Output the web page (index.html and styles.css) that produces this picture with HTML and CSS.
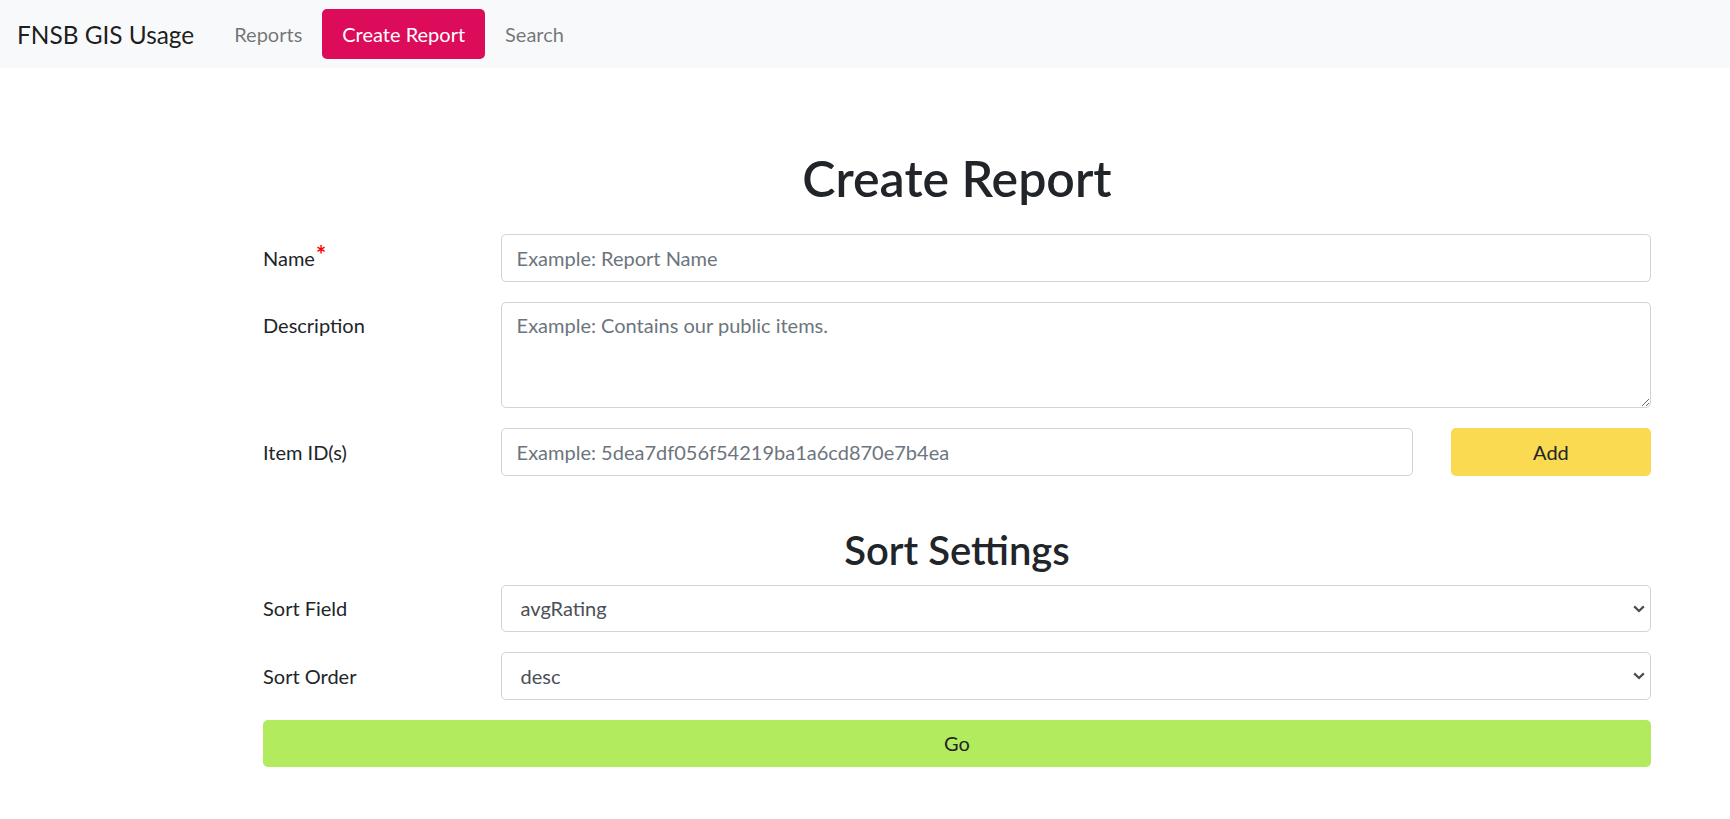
FILE: index.html
```html
<!DOCTYPE html>
<html lang="en">
<head>
<meta charset="utf-8">
<title>FNSB GIS Usage - Create Report</title>
<link rel="stylesheet" href="styles.css">
</head>
<body>
<nav class="navbar">
  <a class="brand" href="#">FNSB GIS Usage</a>
  <ul class="nav">
    <li><a class="nav-link" href="#">Reports</a></li>
    <li><a class="nav-link active" href="#">Create Report</a></li>
    <li><a class="nav-link" href="#">Search</a></li>
  </ul>
</nav>
<main class="page">
  <div class="container">
    <h1 class="title">Create Report</h1>
    <form class="form">
      <div class="row">
        <label class="label" for="name">Name<span class="req">*</span></label>
        <input class="control span-10" id="name" type="text" placeholder="Example: Report Name">
      </div>
      <div class="row">
        <label class="label" for="desc">Description</label>
        <textarea class="control textarea span-10" id="desc" placeholder="Example: Contains our public items."></textarea>
      </div>
      <div class="row">
        <label class="label" for="items">Item ID(s)</label>
        <input class="control span-8" id="items" type="text" placeholder="Example: 5dea7df056f54219ba1a6cd870e7b4ea">
        <button class="btn btn-add span-2" type="button">Add</button>
      </div>
      <h2 class="subtitle">Sort Settings</h2>
      <div class="row">
        <label class="label" for="sortField">Sort Field</label>
        <div class="select-wrap span-10">
          <select class="control select" id="sortField">
            <option>avgRating</option>
          </select>
          <svg class="chevron" width="12" height="8" viewBox="0 0 12 8" aria-hidden="true"><path d="M1.2 1.4 L6 6 L10.8 1.4" fill="none" stroke="#474c52" stroke-width="2.2"/></svg>
        </div>
      </div>
      <div class="row">
        <label class="label" for="sortOrder">Sort Order</label>
        <div class="select-wrap span-10">
          <select class="control select" id="sortOrder">
            <option>desc</option>
          </select>
          <svg class="chevron" width="12" height="8" viewBox="0 0 12 8" aria-hidden="true"><path d="M1.2 1.4 L6 6 L10.8 1.4" fill="none" stroke="#474c52" stroke-width="2.2"/></svg>
        </div>
      </div>
      <button class="btn btn-go" type="button">Go</button>
    </form>
  </div>
</main>
</body>
</html>
```
FILE: styles.css
```css
* { box-sizing: border-box; }

body {
  margin: 0;
  font-family: Lato, "Liberation Sans", sans-serif;
  font-size: 20px;
  line-height: 1.5;
  color: #212529;
  background: #fff;
}

.navbar {
  display: flex;
  align-items: center;
  height: 68px;
  padding: 0 17px;
  background: #f8f9fa;
}

.brand {
  font-size: 24.4px;
  line-height: 37.5px;
  color: rgba(0, 0, 0, 0.9);
  text-decoration: none;
  margin-right: 20px;
  padding-top: 2px;
}

.nav {
  display: flex;
  list-style: none;
  margin: 0;
  padding: 0;
}

.nav-link {
  display: block;
  padding: 10px 20px;
  line-height: 30px;
  font-size: 20px;
  color: rgba(0, 0, 0, 0.55);
  text-decoration: none;
  border-radius: 5px;
}

.nav-link.active {
  background: #dc0c5b;
  color: #fff;
}

.page {
  padding-top: 80px;
}

.container {
  width: 1388px;
  margin-left: 263px;
}

.title {
  margin: 0 0 26px;
  font-size: 50px;
  line-height: 60px;
  font-weight: 600;
  text-align: center;
}

.subtitle {
  margin: 50.5px 0 10.5px;
  font-size: 40px;
  line-height: 48px;
  font-weight: 600;
  text-align: center;
}

.row {
  display: grid;
  grid-template-columns: repeat(12, 1fr);
  column-gap: 37.5px;
  margin-bottom: 20px;
  align-items: start;
}

.label {
  grid-column: span 2;
  padding-top: 8.75px;
  line-height: 30px;
}

.req {
  color: #f00;
  font-weight: 700;
  font-size: 24px;
  line-height: 0;
  vertical-align: 2px;
  margin-left: 1px;
}

.span-10 { grid-column: span 10; }
.span-8 { grid-column: span 8; }
.span-2 { grid-column: span 2; }

.control {
  display: block;
  width: 100%;
  height: 47.5px;
  padding: 7.5px 15px;
  font-family: inherit;
  font-size: 20px;
  line-height: 30px;
  color: #495057;
  background: #fff;
  border: 1px solid #ced4da;
  border-radius: 5px;
  outline: none;
}

.control::placeholder {
  color: #6c757d;
  opacity: 1;
}

.textarea {
  height: 106.5px;
  resize: vertical;
}

.select-wrap {
  position: relative;
}

.select {
  appearance: none;
  -webkit-appearance: none;
  padding-left: 19px;
  padding-right: 36px;
}

.chevron {
  position: absolute;
  right: 6px;
  top: 20px;
  pointer-events: none;
}

.btn {
  display: block;
  height: 47.5px;
  padding: 7.5px 15px;
  font-family: inherit;
  font-size: 20px;
  line-height: 30px;
  color: #212529;
  border: none;
  border-radius: 5px;
  text-align: center;
}

.btn-add {
  width: 100%;
  background: #f9da50;
}

.btn-go {
  width: 100%;
  background: #b2eb5e;
}
```
